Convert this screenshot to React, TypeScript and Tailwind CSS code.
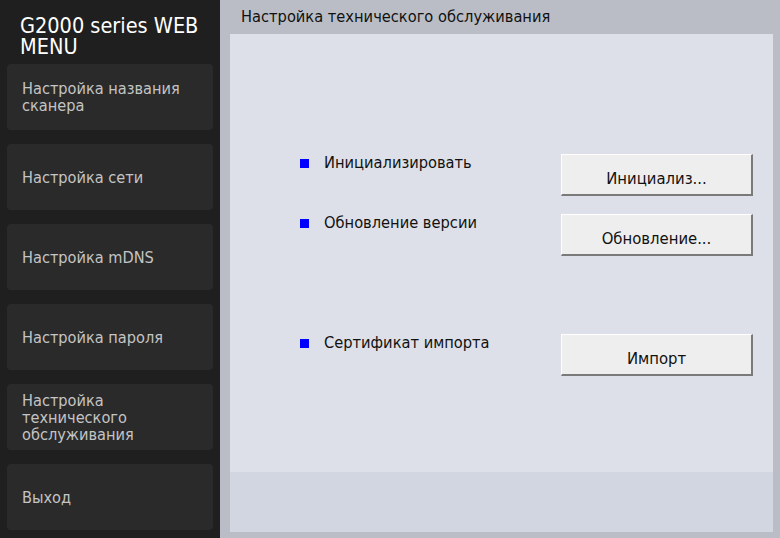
import * as React from "react";

const menu = [
  "Настройка названия сканера",
  "Настройка сети",
  "Настройка mDNS",
  "Настройка пароля",
  "Настройка технического обслуживания",
  "Выход",
];

type Row = { label: string; button: string; gap: string };

const rows: Row[] = [
  { label: "Инициализировать", button: "Инициализ...", gap: "mt-[120px]" },
  { label: "Обновление версии", button: "Обновление...", gap: "mt-[18px]" },
  { label: "Сертификат импорта", button: "Импорт", gap: "mt-[78px]" },
];

function ActionRow({ label, button, gap }: Row) {
  return (
    <div className={`flex items-start ${gap}`}>
      <div className="flex w-[331px] items-center pl-[70px]">
        <span className="h-[9px] w-[9px] bg-[#0000ff]" />
        <span className="ml-[15px] text-[16.3px] leading-[18px] text-[#111]">{label}</span>
      </div>
      <button
        type="button"
        className="flex h-[42px] w-[192px] items-end justify-center border-t border-l border-white border-r-2 border-b-2 border-r-[#7a7a7a] border-b-[#7a7a7a] bg-[#eeeeee] pb-[6px] text-[16.5px] leading-[18px] text-[#111]"
      >
        {button}
      </button>
    </div>
  );
}

export default function App() {
  return (
    <div
      className="flex h-[538px] w-[780px] overflow-hidden"
      style={{ fontFamily: "Tahoma, 'DejaVu Sans Condensed', 'Liberation Sans', sans-serif" }}
    >
      <aside className="flex w-[220px] shrink-0 flex-col bg-[#1f1f1f] px-[7px]">
        <h1 className="mt-[15px] pl-[13px] text-[21.5px] leading-[21px] text-white">
          G2000 series WEB MENU
        </h1>
        <ul className="mt-[7px] flex flex-col gap-[14px]">
          {menu.map((m) => (
            <li
              key={m}
              className="flex h-[66px] items-center rounded-[4px] bg-[#2a2a2a] px-[15px] text-[16.2px] leading-[17px] text-[#c4c4c4]"
            >
              {m}
            </li>
          ))}
        </ul>
      </aside>
      <main className="flex flex-1 flex-col bg-[#babdc5] pl-[10px] pr-[7px] pb-[6px]">
        <div className="flex h-[34px] items-center pl-[11px] text-[16.3px] text-[#111]">
          Настройка технического обслуживания
        </div>
        <div className="flex flex-1 flex-col bg-[#dde0e8]">
          <div className="flex-1">
            {rows.map((r) => (
              <ActionRow key={r.label} {...r} />
            ))}
          </div>
          <div className="h-[60px] bg-[#d1d6e1]" />
        </div>
      </main>
    </div>
  );
}
